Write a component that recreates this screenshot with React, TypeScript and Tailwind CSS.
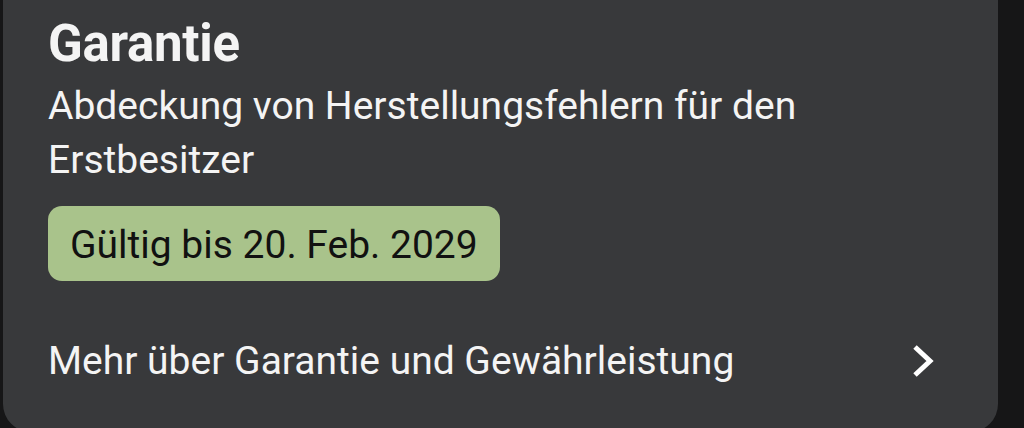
const Chevron = () => (
  <svg width="24" height="34" viewBox="0 0 24 34" fill="none" className="shrink-0">
    <polyline points="3,3 18,17 3,31" stroke="#ffffff" strokeWidth="5" strokeLinejoin="miter" strokeLinecap="butt" />
  </svg>
);

const WarrantyCard = () => {
  return (
    <div className="h-[432px] w-[995px] ml-[3px] rounded-b-[28px] bg-[#38393b] pl-[45px] pr-[62px] pt-[14px] text-[#f4f4f4]">
      <h1 className="text-[51px] leading-[60px] font-bold tracking-[-0.3px]">Garantie</h1>
      <p className="mt-[5px] text-[39px] leading-[54px]">
        Abdeckung von Herstellungsfehlern für den
        <br />
        Erstbesitzer
      </p>
      <div className="mt-[19px] inline-flex h-[75px] items-center rounded-[14px] bg-[#a9c38b] px-[22px] pt-[4px] text-[39px] text-[#111]">
        Gültig bis 20. Feb. 2029
      </div>
      <div className="mt-[56px] flex h-[48px] items-center justify-between">
        <span className="text-[39px] leading-[48px]">Mehr über Garantie und Gewährleistung</span>
        <Chevron />
      </div>
    </div>
  );
};

export default function App() {
  return (
    <div className="h-[428px] w-[1024px] overflow-hidden bg-[#161617] font-['Roboto',sans-serif]">
      <WarrantyCard />
    </div>
  );
}
